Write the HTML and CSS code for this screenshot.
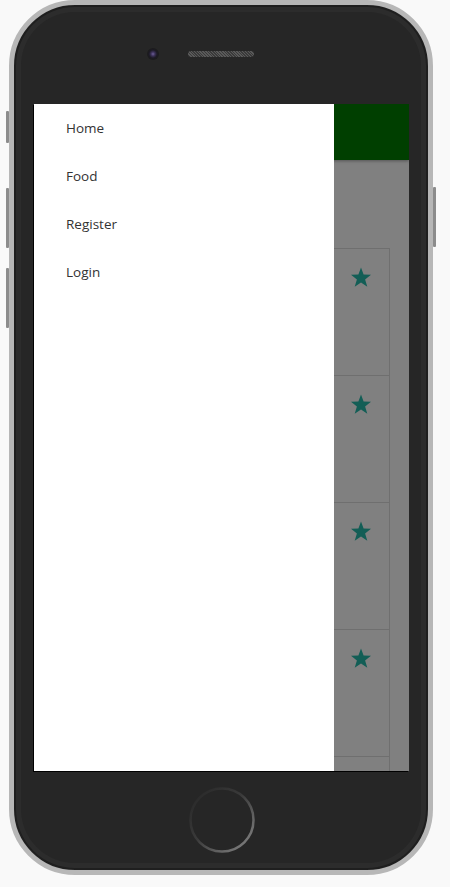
FILE: index.html
```html
<!DOCTYPE html>
<html>
<head>
<meta charset="utf-8">
<link rel="stylesheet" href="styles.css">
</head>
<body>
<div class="phone">
  <span class="btn btn-mute"></span>
  <span class="btn btn-volup"></span>
  <span class="btn btn-voldown"></span>
  <span class="btn btn-power"></span>
  <div class="top">
    <span class="camera"></span>
    <span class="speaker"></span>
  </div>
  <div class="screen">
    <div class="app">
      <div class="toolbar"></div>
      <div class="content">
        <div class="card"><svg class="star" viewBox="0 0 24 24"><polygon points="12,1.5 14.6,8.6 22,8.8 16.1,13.4 18.3,20.8 12,16.4 5.7,20.8 7.9,13.4 2,8.8 9.4,8.6"/></svg></div>
        <div class="card"><svg class="star" viewBox="0 0 24 24"><polygon points="12,1.5 14.6,8.6 22,8.8 16.1,13.4 18.3,20.8 12,16.4 5.7,20.8 7.9,13.4 2,8.8 9.4,8.6"/></svg></div>
        <div class="card"><svg class="star" viewBox="0 0 24 24"><polygon points="12,1.5 14.6,8.6 22,8.8 16.1,13.4 18.3,20.8 12,16.4 5.7,20.8 7.9,13.4 2,8.8 9.4,8.6"/></svg></div>
        <div class="card"><svg class="star" viewBox="0 0 24 24"><polygon points="12,1.5 14.6,8.6 22,8.8 16.1,13.4 18.3,20.8 12,16.4 5.7,20.8 7.9,13.4 2,8.8 9.4,8.6"/></svg></div>
        <div class="card"></div>
      </div>
    </div>
    <nav class="drawer">
      <a class="item">Home</a>
      <a class="item">Food</a>
      <a class="item">Register</a>
      <a class="item">Login</a>
    </nav>
  </div>
  <div class="bottom">
    <svg class="home" viewBox="0 0 68 68">
      <defs>
        <linearGradient id="ring" x1="0" y1="0" x2="1" y2="1">
          <stop offset="0" stop-color="#262626"/>
          <stop offset="0.45" stop-color="#3a3a3a"/>
          <stop offset="1" stop-color="#8a8a8a"/>
        </linearGradient>
      </defs>
      <circle cx="34" cy="34" r="31.5" fill="none" stroke="url(#ring)" stroke-width="2.5"/>
    </svg>
  </div>
</div>
</body>
</html>
```
FILE: styles.css
```css
html, body {
  margin: 0;
  padding: 0;
  background: #f9f9f9;
  font-family: "Open Sans", "Noto Sans", sans-serif;
}

.phone {
  position: relative;
  box-sizing: border-box;
  width: 424px;
  height: 875px;
  margin-left: 9px;
  border: 5px solid #b7b7b7;
  border-radius: 66px;
  background: #262626;
  box-shadow: inset 0 0 0 2px #1f1f1f, inset 0 0 0 7px #2c2c2c;
  display: flex;
  flex-direction: column;
  padding: 0 19px 0 20px;
}

.btn {
  position: absolute;
  width: 3px;
  background: #8c8c8c;
  border-radius: 1px;
}
.btn-mute { left: -8px; top: 106px; height: 32px; }
.btn-volup { left: -8px; top: 183px; height: 60px; }
.btn-voldown { left: -8px; top: 263px; height: 60px; }
.btn-power { right: -8px; top: 182px; height: 60px; }

.top {
  height: 99px;
  display: flex;
  align-items: center;
  padding-left: 113px;
  gap: 29px;
  box-sizing: border-box;
  padding-bottom: 2px;
}

.camera {
  width: 12px;
  height: 12px;
  border-radius: 50%;
  background: radial-gradient(circle at 50% 50%, #6f5f9a 0, #3b3158 2px, #1c1a24 4px, #1b1b1b 6px);
}

.speaker {
  width: 66px;
  height: 6px;
  border-radius: 3px;
  background-color: #4a4a4a;
  background-image: repeating-linear-gradient(45deg, #5a5a5a 0 1px, #3a3a3a 1px 2px);
}

.screen {
  position: relative;
  height: 667px;
  width: 375px;
  overflow: hidden;
  box-shadow: -1px 1px 0 #000;
}

.app {
  height: 100%;
  background: #808080;
}

.toolbar {
  height: 56px;
  background: #003f00;
  box-shadow: 0 1px 3px rgba(0, 0, 0, 0.35);
  position: relative;
}

.content {
  padding-top: 88px;
  padding-right: 19px;
}

.card {
  height: 127px;
  border-top: 1px solid #6f6f6f;
  border-right: 1px solid #6f6f6f;
  display: flex;
  justify-content: flex-end;
  padding-right: 16px;
  padding-top: 17px;
  box-sizing: border-box;
}

.star {
  width: 24px;
  height: 24px;
  fill: #135e56;
}

.drawer {
  position: absolute;
  left: 0;
  top: 0;
  bottom: 0;
  width: 300px;
  background: #fff;
  display: flex;
  flex-direction: column;
}

.item {
  height: 48px;
  line-height: 48px;
  padding-left: 32px;
  font-size: 13.5px;
  color: #333;
}

.bottom {
  flex: 1;
  display: flex;
  justify-content: center;
  padding-top: 15px;
}

.home {
  width: 68px;
  height: 68px;
}
```
